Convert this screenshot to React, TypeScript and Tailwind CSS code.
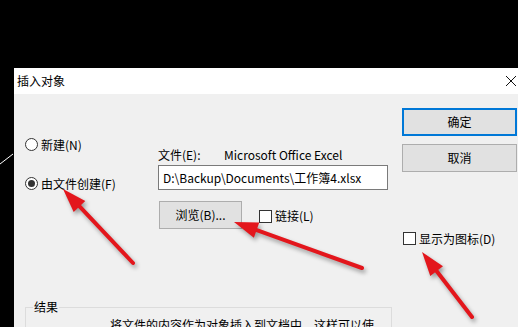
import React from "react";

const font = "font-['Noto_Sans_CJK_SC',sans-serif]";

type Pt = [number, number];

function Arrow({ tip, tail }: { tip: Pt; tail: Pt }) {
  const dx = tip[0] - tail[0];
  const dy = tip[1] - tail[1];
  const len = Math.hypot(dx, dy);
  const ux = dx / len;
  const uy = dy / len;
  const head = 24;
  const half = 8;
  const bx = tip[0] - ux * head;
  const by = tip[1] - uy * head;
  const nx = -uy;
  const ny = ux;
  const pts = [
    `${tip[0]},${tip[1]}`,
    `${bx + nx * half},${by + ny * half}`,
    `${bx - nx * half},${by - ny * half}`,
  ].join(" ");
  return (
    <g>
      <line
        x1={tail[0]}
        y1={tail[1]}
        x2={bx + ux * 2}
        y2={by + uy * 2}
        stroke="#e3161c"
        strokeWidth={4}
        strokeLinecap="round"
      />
      <polygon points={pts} fill="#e3161c" />
    </g>
  );
}

function Radio({ checked, label }: { checked?: boolean; label: string }) {
  return (
    <div className="flex items-center h-[13px]">
      <span className="w-[13px] h-[13px] rounded-full border border-[#333] bg-white flex items-center justify-center">
        {checked && <span className="w-[7px] h-[7px] rounded-full bg-[#333]" />}
      </span>
      <span className="ml-[3px] text-[12px] leading-none text-black">{label}</span>
    </div>
  );
}

function Check({ label }: { label: string }) {
  return (
    <div className="flex items-center h-[13px]">
      <span className="w-[13px] h-[13px] border border-[#333] bg-white" />
      <span className="ml-[3px] text-[12px] leading-none text-black">{label}</span>
    </div>
  );
}

export default function App() {
  return (
    <div className={`relative w-[518px] h-[327px] overflow-hidden bg-black ${font}`}>
      <div className="h-[68px]" />
      <div className="flex h-[259px] overflow-hidden">
        <svg width="14" height="259" className="shrink-0">
          <line x1="0" y1="96" x2="13" y2="86" stroke="#fff" strokeWidth="1" />
        </svg>
        <div className="flex-1 flex flex-col bg-[#f0f0f0] overflow-hidden">
          <div className="shrink-0 h-[26px] bg-white flex items-center justify-between pl-[3px] pr-[1px]">
            <span className="text-[12px] text-black leading-none">插入对象</span>
            <svg width="12" height="12" viewBox="0 0 12 12">
              <path d="M1 1 L11 11 M11 1 L1 11" stroke="#111" strokeWidth="1" />
            </svg>
          </div>

          <div className="shrink-0 flex">
            <div className="w-[144px] pl-[11px] pt-[44px] flex flex-col gap-[26px]">
              <Radio label="新建(N)" />
              <Radio checked label="由文件创建(F)" />
            </div>

            <div className="w-[230px] pt-[54px] flex flex-col">
              <div className="flex text-[12px] leading-[14px] text-black">
                <span className="w-[66px]">文件(E):</span>
                <span>Microsoft Office Excel</span>
              </div>
              <div className="mt-[3px] h-[25px] border border-[#7a7a7a] bg-white flex items-center pl-[4px] text-[12px] text-black">
                D:\Backup\Documents\工作簿4.xlsx
              </div>
              <div className="mt-[11px] flex items-center">
                <div className="ml-[1px] w-[83px] h-[28px] border border-[#adadad] bg-[#e1e1e1] flex items-center justify-center text-[12px] text-black">
                  浏览(B)...
                </div>
                <div className="ml-[17px] mt-[2px]">
                  <Check label="链接(L)" />
                </div>
              </div>
            </div>

            <div className="ml-[14px] w-[115px] pt-[14px] flex flex-col">
              <div className="h-[28px] border-2 border-[#0078d7] bg-[#e1e1e1] flex items-center justify-center text-[12px] text-black">
                确定
              </div>
              <div className="mt-[8px] h-[28px] border border-[#adadad] bg-[#e1e1e1] flex items-center justify-center text-[12px] text-black">
                取消
              </div>
              <div className="mt-[60px] ml-[1px]">
                <Check label="显示为图标(D)" />
              </div>
            </div>
          </div>

          <div className="shrink-0 ml-[11px] mt-[62px] w-[367px] relative border border-[#dcdcdc] h-[60px]">
            <span className="absolute left-[7px] -top-[8px] px-[1px] bg-[#f0f0f0] text-[12px] leading-[14px] text-black">
              结果
            </span>
            <div className="pl-[84px] pt-[10px] text-[12px] leading-[14px] text-black whitespace-nowrap">
              将文件的内容作为对象插入到文档中，这样可以使
            </div>
          </div>
        </div>
      </div>

      <svg
        width="518"
        height="327"
        className="absolute inset-0 pointer-events-none drop-shadow-[2px_3px_2px_rgba(0,0,0,0.35)]"
      >
        <Arrow tip={[63, 189]} tail={[133, 263]} />
        <Arrow tip={[234, 222]} tail={[362, 268]} />
        <Arrow tip={[422, 252]} tail={[472, 317]} />
      </svg>
    </div>
  );
}
